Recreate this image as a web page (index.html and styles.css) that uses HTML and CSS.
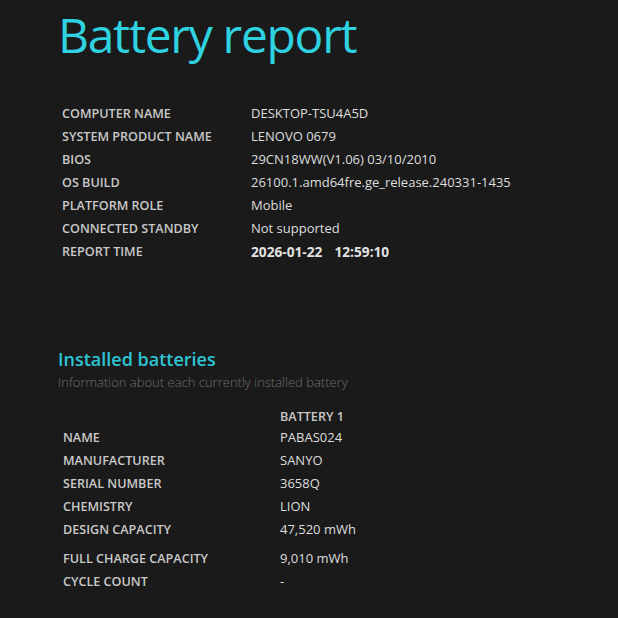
FILE: index.html
```html
<!DOCTYPE html>
<html>
<head>
<meta charset="utf-8">
<link rel="stylesheet" href="styles.css">
</head>
<body>
<div class="page">
  <h1 class="title">Battery report</h1>
  <table class="info">
    <tr><td class="label">COMPUTER NAME</td><td class="value">DESKTOP-TSU4A5D</td></tr>
    <tr><td class="label">SYSTEM PRODUCT NAME</td><td class="value">LENOVO 0679</td></tr>
    <tr><td class="label">BIOS</td><td class="value">29CN18WW(V1.06) 03/10/2010</td></tr>
    <tr><td class="label">OS BUILD</td><td class="value">26100.1.amd64fre.ge_release.240331-1435</td></tr>
    <tr><td class="label">PLATFORM ROLE</td><td class="value">Mobile</td></tr>
    <tr><td class="label">CONNECTED STANDBY</td><td class="value">Not supported</td></tr>
    <tr><td class="label">REPORT TIME</td><td class="value strong"><span class="date">2026-01-22</span><span class="time">12:59:10</span></td></tr>
  </table>

  <h2 class="section">Installed batteries</h2>
  <div class="subtitle">Information about each currently installed battery</div>

  <table class="batt">
    <tr class="head"><td class="label"></td><td class="colhead">BATTERY 1</td></tr>
    <tr><td class="label">NAME</td><td class="value">PABAS024</td></tr>
    <tr><td class="label">MANUFACTURER</td><td class="value">SANYO</td></tr>
    <tr><td class="label">SERIAL NUMBER</td><td class="value">3658Q</td></tr>
    <tr><td class="label">CHEMISTRY</td><td class="value">LION</td></tr>
    <tr class="spaced"><td class="label">DESIGN CAPACITY</td><td class="value">47,520 mWh</td></tr>
    <tr><td class="label">FULL CHARGE CAPACITY</td><td class="value">9,010 mWh</td></tr>
    <tr><td class="label">CYCLE COUNT</td><td class="value">-</td></tr>
  </table>
</div>
</body>
</html>
```

FILE: styles.css
```css
html, body {
  margin: 0;
  padding: 0;
  background: #1a1a1a;
}
body {
  font-family: "Open Sans", "Noto Sans", sans-serif;
  color: #d8d8d8;
}
.page {
  padding: 0 0 0 58px;
}
.title {
  margin: 0;
  padding-top: 3px;
  font-weight: 400;
  font-size: 48px;
  line-height: 64px;
  color: #2ed2e0;
  letter-spacing: -1.3px;
}
.info {
  border-collapse: collapse;
  margin: 35px 0 0 4px;
}
.info td {
  padding: 0;
  height: 23px;
  line-height: 23px;
}
.info .label {
  width: 189px;
}
.label {
  font-weight: 600;
  color: #c9c9c9;
  font-size: 12.6px;
}
.value {
  color: #dedede;
  font-size: 13px;
}
.strong {
  font-weight: 700;
  font-size: 13.7px;
  color: #e2e2e2;
}
.date {
  margin-right: 12px;
}
.section {
  margin: 84px 0 0 0;
  font-size: 18px;
  font-weight: 600;
  line-height: 24px;
  color: #2ec5d4;
}
.subtitle {
  font-size: 13px;
  color: #6e6e6e;
  font-weight: 300;
  line-height: 18px;
  padding-top: 2px;
}
.batt {
  border-collapse: collapse;
  margin: 16px 0 0 5px;
}
.batt td {
  padding: 0;
  height: 23px;
  line-height: 23px;
}
.batt .head td {
  height: 19px;
  line-height: 19px;
  vertical-align: top;
}
.batt .label {
  width: 217px;
}
.colhead {
  font-weight: 600;
  color: #c9c9c9;
  font-size: 12.6px;
}
.batt .spaced td {
  height: 29px;
  vertical-align: top;
}
```
